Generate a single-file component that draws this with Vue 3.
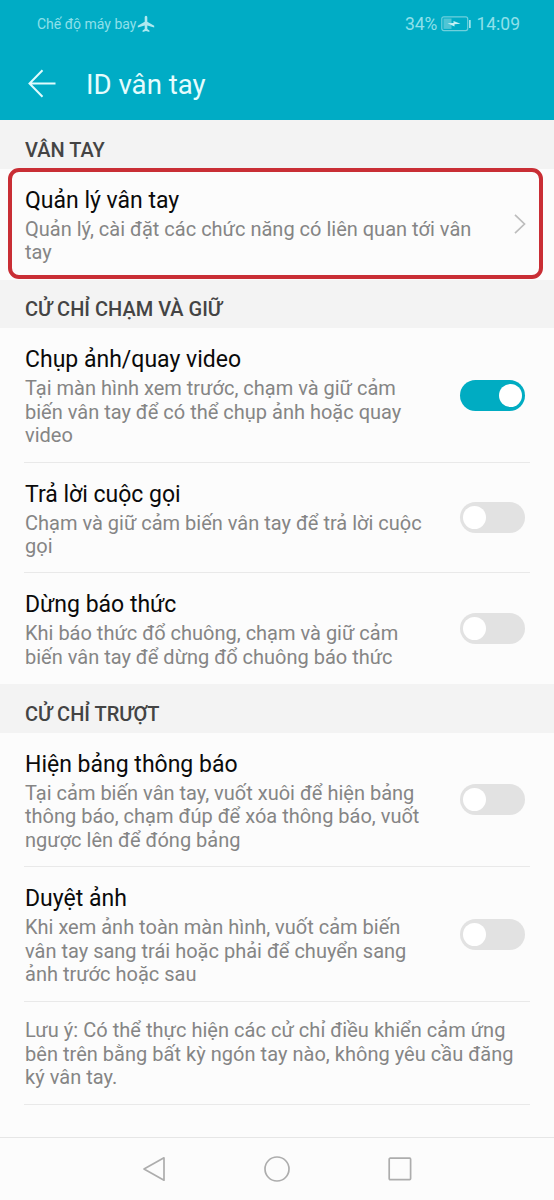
<script setup>
const sections = [
  {
    title: 'VÂN TAY',
    rows: [
      { title: 'Quản lý vân tay', lines: ['Quản lý, cài đặt các chức năng có liên quan tới vân', 'tay'], link: true },
    ],
  },
  {
    title: 'CỬ CHỈ CHẠM VÀ GIỮ',
    rows: [
      { title: 'Chụp ảnh/quay video', lines: ['Tại màn hình xem trước, chạm và giữ cảm', 'biến vân tay để có thể chụp ảnh hoặc quay', 'video'], on: true },
      { title: 'Trả lời cuộc gọi', lines: ['Chạm và giữ cảm biến vân tay để trả lời cuộc', 'gọi'] },
      { title: 'Dừng báo thức', lines: ['Khi báo thức đổ chuông, chạm và giữ cảm', 'biến vân tay để dừng đổ chuông báo thức'] },
    ],
  },
  {
    title: 'CỬ CHỈ TRƯỢT',
    rows: [
      { title: 'Hiện bảng thông báo', lines: ['Tại cảm biến vân tay, vuốt xuôi để hiện bảng', 'thông báo, chạm đúp để xóa thông báo, vuốt', 'ngược lên để đóng bảng'] },
      { title: 'Duyệt ảnh', lines: ['Khi xem ảnh toàn màn hình, vuốt cảm biến', 'vân tay sang trái hoặc phải để chuyển sang', 'ảnh trước hoặc sau'] },
    ],
  },
]
const note = ['Lưu ý: Có thể thực hiện các cử chỉ điều khiển cảm ứng', 'bên trên bằng bất kỳ ngón tay nào, không yêu cầu đăng', 'ký vân tay.']
</script>

<template>
  <div class="screen">
    <header class="top">
      <div class="status">
        <span class="mode">Chế độ máy bay</span>
        <svg class="plane" width="18" height="18" viewBox="0 0 18 18">
          <path d="M9 .8c-.8 0-1.300.8-1.300 1.700v4.200L.8 10.700v1.900l6.900-2v3.500l-2.100 1.500v1.300L9 16l3.400.9v-1.300l-2.100-1.500v-3.500l6.900 2v-1.900l-6.900-4V2.500C10.300 1.600 9.800.8 9 .8z" fill="#b0e9f0" />
        </svg>
        <span class="percent">34%</span>
        <svg class="battery" width="31" height="16" viewBox="0 0 31 16">
          <rect x=".8" y=".8" width="25.900" height="13.800" rx="2" fill="none" stroke="#6fd0dd" stroke-width="1.200" />
          <rect x="2.500" y="2.500" width="8" height="10.400" fill="#4fc5d5" />
          <path d="M6.500 7.300l6-.4V5l7 2.800-6 .5v2.100z" fill="#c5f1f5" />
          <rect x="28" y="4" width="1.700" height="8" fill="#a2e5ed" />
        </svg>
        <span class="clock">14:09</span>
      </div>
      <div class="bar">
        <svg class="back" width="30" height="30" viewBox="0 0 30 30">
          <path d="M15.500 1.200L2.500 14.500l13 13.300M2.500 14.500H28.500" fill="none" stroke="#e0fbfd" stroke-width="2" />
        </svg>
        <h1>ID vân tay</h1>
      </div>
    </header>

    <main>
      <section v-for="s in sections" :key="s.title">
        <h2><span>{{ s.title }}</span></h2>
        <div v-for="r in s.rows" :key="r.title" class="row" :class="{ marked: r.link }">
          <div class="text">
            <h3><span>{{ r.title }}</span></h3>
            <p v-for="l in r.lines" :key="l"><span>{{ l }}</span></p>
          </div>
          <svg v-if="r.link" class="chevron" width="14" height="22" viewBox="0 0 14 22">
            <path d="M2 1.800L11.500 11 2 20.200" fill="none" stroke="#bdbdbd" stroke-width="1.700" />
          </svg>
          <div v-else class="switch" :class="{ on: r.on }"><i></i></div>
        </div>
      </section>
      <div class="note">
        <p v-for="l in note" :key="l"><span>{{ l }}</span></p>
      </div>
    </main>

    <nav>
      <svg width="26" height="28" viewBox="0 0 26 28">
        <path d="M23 2.800V25.200L3 14z" fill="none" stroke="#adadad" stroke-width="1.700" stroke-linejoin="round" />
      </svg>
      <svg width="28" height="28" viewBox="0 0 28 28">
        <circle cx="14" cy="14" r="12" fill="none" stroke="#adadad" stroke-width="1.700" />
      </svg>
      <svg width="26" height="26" viewBox="0 0 26 26">
        <rect x="2.200" y="2.200" width="21.400" height="21.400" rx="1" fill="none" stroke="#adadad" stroke-width="1.700" />
      </svg>
    </nav>
  </div>
</template>

<style>
body {
  margin: 0;
  background: #fcfcfc;
}
</style>

<style scoped>
.screen {
  width: 554px;
  height: 1200px;
  display: flex;
  flex-direction: column;
  overflow: hidden;
  background: #fcfcfc;
  font-family: Roboto, "Noto Sans", sans-serif;
  white-space: nowrap;
}
h1, h2, h3, p {
  margin: 0;
  font-weight: 400;
}
.top {
  height: 120px;
  flex: none;
  background: #00acc5;
}
.status {
  height: 47px;
  display: flex;
  align-items: center;
  padding: 0 34px 0 37px;
  color: #8fe0ea;
}
.mode {
  font-size: 14px;
}
.plane {
  margin-left: 1px;
}
.percent {
  margin-left: auto;
  font-size: 17.500px;
}
.battery {
  margin-left: 4px;
}
.clock {
  margin-left: 4px;
  font-size: 17.500px;
}
.bar {
  height: 73px;
  display: flex;
  align-items: center;
  padding-left: 27px;
}
h1 {
  margin-left: 29px;
  padding-top: 1px;
  font-size: 27.600px;
  color: #e6fcfd;
}
main {
  flex: 1;
  padding-top: 0.500px;
  background: linear-gradient(#f3f3f3 2px, transparent 2px);
}
h2 {
  height: 48.500px;
  box-sizing: border-box;
  padding: 10.500px 0 0 25px;
  display: flex;
  align-items: center;
  background: #f3f3f3;
  color: #444;
  font-size: 20px;
  font-weight: 500;
}
.row {
  position: relative;
  display: flex;
  justify-content: space-between;
  align-items: center;
  padding: 13.800px 29px 14.600px 25px;
}
.text {
  padding-top: 2px;
}
.row + .row::before,
.note::before,
.note::after {
  content: "";
  position: absolute;
  top: -1px;
  left: 24px;
  right: 24px;
  height: 1px;
  background: #e9e9e9;
}
.note::after {
  top: auto;
  bottom: 0;
}
.marked::after {
  content: "";
  position: absolute;
  left: 8px;
  right: 11px;
  top: -1px;
  bottom: 1px;
  border: 4px solid #c92e35;
  border-radius: 11px;
}
h3 {
  height: 33px;
  line-height: 32px;
  font-size: 23px;
  color: #0a0a0a;
}
p {
  height: 23.700px;
  line-height: 23.700px;
  font-size: 20px;
  color: #858585;
}
.chevron {
  margin-right: -2px;
}
.switch {
  width: 65px;
  height: 31px;
  box-sizing: border-box;
  padding: 4px 3px;
  border-radius: 16px;
  display: flex;
  background: #e2e2e2;
}
.switch.on {
  justify-content: flex-end;
  background: #00acc2;
}
.switch i {
  width: 23px;
  height: 23px;
  border-radius: 50%;
  background: #fff;
}
.note {
  position: relative;
  padding: 17.300px 0 15.200px 25px;
}
.note p {
  letter-spacing: 0.030px;
}
nav {
  height: 63px;
  box-sizing: border-box;
  border-top: 1px solid #e6e6e6;
  padding: 0 141px;
  display: flex;
  justify-content: space-between;
  align-items: center;
}
</style>
